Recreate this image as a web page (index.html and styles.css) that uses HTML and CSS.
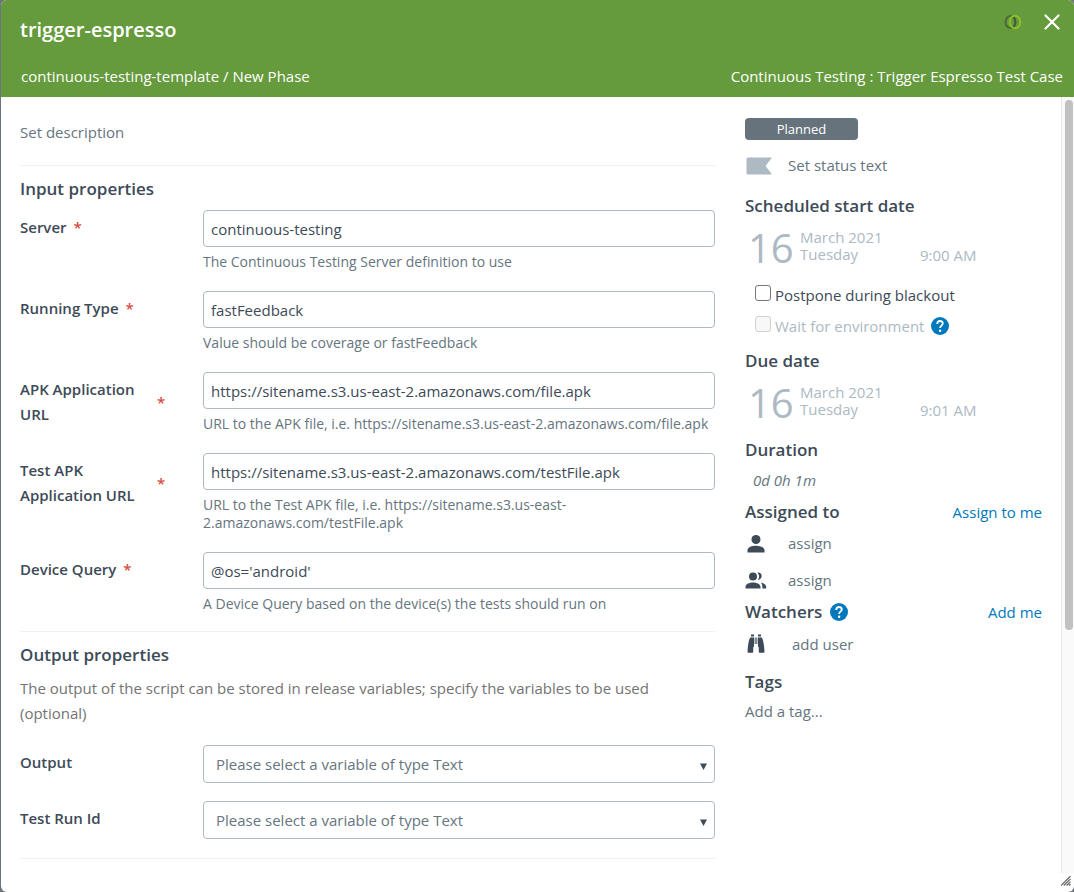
FILE: index.html
```html
<!DOCTYPE html>
<html lang="en">
<head>
<meta charset="utf-8">
<title>trigger-espresso</title>
<link rel="stylesheet" href="styles.css">
</head>
<body>
<div class="modal">
  <header class="header">
    <div class="header-row top-row">
      <h1 class="title">trigger-espresso</h1>
      <div class="header-actions">
        <svg class="task-logo" width="18" height="16" viewBox="0 0 18 16" fill="none" stroke-width="2">
          <ellipse cx="6.5" cy="8" rx="5" ry="6" stroke="#4b6b3c"/>
          <ellipse cx="11" cy="8" rx="5.3" ry="6.2" stroke="#8fbe2b"/>
          <path d="M9.6 3.2c2.4 2.6 2.4 7 0 9.6" stroke="#3f5a33" stroke-width="1.5"/>
        </svg>
        <button class="close" type="button" aria-label="Close">
          <svg width="16" height="16" viewBox="0 0 16 16" stroke="#fff" stroke-width="2.2" stroke-linecap="round"><path d="M1.5 1.5l13 13M14.5 1.5l-13 13"/></svg>
        </button>
      </div>
    </div>
    <div class="header-row">
      <span class="crumbs">continuous-testing-template / New Phase</span>
      <span>Continuous Testing : Trigger Espresso Test Case</span>
    </div>
  </header>

  <div class="body">
    <main class="main">
      <p class="description">Set description</p>
      <section class="section">
        <h2 class="heading">Input properties</h2>
        <div class="fields">
          <div class="field">
            <label class="label" for="server"><span class="label-text">Server</span><span class="required">*</span></label>
            <div class="control"><input class="input" id="server" type="text" value="continuous-testing"><p class="hint">The Continuous Testing Server definition to use</p></div>
          </div>
          <div class="field">
            <label class="label" for="running"><span class="label-text">Running Type</span><span class="required">*</span></label>
            <div class="control"><input class="input" id="running" type="text" value="fastFeedback"><p class="hint">Value should be coverage or fastFeedback</p></div>
          </div>
          <div class="field">
            <label class="label" for="apk"><span class="label-text">APK Application URL</span><span class="required">*</span></label>
            <div class="control"><input class="input" id="apk" type="text" value="https://sitename.s3.us-east-2.amazonaws.com/file.apk"><p class="hint">URL to the APK file, i.e. https://sitename.s3.us-east-2.amazonaws.com/file.apk</p></div>
          </div>
          <div class="field">
            <label class="label" for="testapk"><span class="label-text">Test APK Application URL</span><span class="required">*</span></label>
            <div class="control"><input class="input" id="testapk" type="text" value="https://sitename.s3.us-east-2.amazonaws.com/testFile.apk"><p class="hint">URL to the Test APK file, i.e. https://sitename.s3.us-east-2.amazonaws.com/testFile.apk</p></div>
          </div>
          <div class="field">
            <label class="label" for="query"><span class="label-text">Device Query</span><span class="required">*</span></label>
            <div class="control"><input class="input" id="query" type="text" value="@os='android'"><p class="hint">A Device Query based on the device(s) the tests should run on</p></div>
          </div>
        </div>
      </section>
      <section class="section">
        <h2 class="heading">Output properties</h2>
        <p class="note">The output of the script can be stored in release variables; specify the variables to be used (optional)</p>
        <div class="fields outputs">
          <div class="field">
            <label class="label" for="output"><span class="label-text">Output</span></label>
            <div class="control select-wrap"><select class="input select" id="output"><option>Please select a variable of type Text</option></select><svg class="arrow" width="7" height="7" viewBox="0 0 7 7"><path d="M0 .5h7L3.500 7z" fill="#3d4a57"/></svg></div>
          </div>
          <div class="field">
            <label class="label" for="runid"><span class="label-text">Test Run Id</span></label>
            <div class="control select-wrap"><select class="input select" id="runid"><option>Please select a variable of type Text</option></select><svg class="arrow" width="7" height="7" viewBox="0 0 7 7"><path d="M0 .5h7L3.500 7z" fill="#3d4a57"/></svg></div>
          </div>
        </div>
      </section>
      <div class="section"></div>
    </main>

    <aside class="side">
      <span class="badge">Planned</span>
      <div class="status">
        <svg width="26" height="18" viewBox="0 0 26 18"><path d="M2 .5h24L19.500 9l6.500 8.500H2A1.500 1.500 0 0 1 .5 16V2A1.500 1.500 0 0 1 2 .5z" fill="#adb9c3"/></svg>
        <span>Set status text</span>
      </div>
      <h2 class="heading">Scheduled start date</h2>
      <div class="date">
        <span class="day">16</span>
        <span class="month">March 2021<br>Tuesday</span>
        <span class="time">9:00 AM</span>
      </div>
      <div class="checks">
        <label class="check"><input class="box" type="checkbox"><span>Postpone during blackout</span></label>
        <div class="check-row">
          <label class="check disabled"><input class="box" type="checkbox" disabled><span>Wait for environment</span></label>
          <svg class="help" width="18" height="18" viewBox="0 0 18 18"><circle cx="9" cy="9" r="9" fill="#0079bc"/><path d="M6.200 6.900C6.200 5 7.400 4 9 4s2.800 1 2.800 2.600c0 1.900-2.700 2.200-2.700 4.300" fill="none" stroke="#fff" stroke-width="1.800"/><circle cx="9.100" cy="13.700" r="1.200" fill="#fff"/></svg>
        </div>
      </div>
      <h2 class="heading">Due date</h2>
      <div class="date due">
        <span class="day">16</span>
        <span class="month">March 2021<br>Tuesday</span>
        <span class="time">9:01 AM</span>
      </div>
      <h2 class="heading">Duration</h2>
      <p class="duration">0d 0h 1m</p>
      <div class="heading-row"><h2 class="heading">Assigned to</h2><a class="link" href="#">Assign to me</a></div>
      <div class="person">
        <svg width="22" height="20" viewBox="0 0 22 20" fill="#3d4a57"><circle cx="11" cy="5.500" r="4.500"/><path d="M2.500 18.500v-2C2.500 13.200 7 11.800 11 11.800s8.500 1.400 8.500 4.700v2z"/></svg>
        <span>assign</span>
      </div>
      <div class="person">
        <svg width="22" height="20" viewBox="0 0 22 20" fill="#3d4a57"><circle cx="8" cy="5.500" r="4"/><path d="M.5 17.500v-1.600C.5 13 4.500 11.500 8 11.500s7.500 1.500 7.500 4.400v1.600zM12.500 1.700c4.800-.9 6.400 6.300 0 7.600 2.200-2.300 2.200-5.200 0-7.600zM16 11.800c3 .4 5.200 1.900 5.200 4.100v1.600h-3.800v-1.600c0-1.600-.4-3-1.400-4.100z"/></svg>
        <span>assign</span>
      </div>
      <div class="heading-row">
        <h2 class="heading">Watchers</h2>
        <svg class="help" width="18" height="18" viewBox="0 0 18 18"><circle cx="9" cy="9" r="9" fill="#0079bc"/><path d="M6.200 6.900C6.200 5 7.400 4 9 4s2.800 1 2.800 2.600c0 1.900-2.700 2.200-2.700 4.300" fill="none" stroke="#fff" stroke-width="1.800"/><circle cx="9.100" cy="13.700" r="1.200" fill="#fff"/></svg>
        <a class="link" href="#">Add me</a>
      </div>
      <div class="person watcher">
        <svg width="22" height="20" viewBox="0 0 22 20" fill="#3d4a57"><path d="M6 .5h3v2H6zM13 .5h3v2h-3zM5 3.500h4v9l-.8 1V18q0 .8-.8.8H3.300q-.8 0-.8-.8C2.800 12 3.400 7.500 5 3.500zM13 3.500h4c1.600 4 2.200 8.500 2.500 14.500q0 .8-.8.8h-4.100q-.8 0-.8-.8v-4.500l-.8-1z"/><path d="M9.500 3.500h3V10h-3z" fill="#818a94"/></svg>
        <span>add user</span>
      </div>
      <h2 class="heading">Tags</h2>
      <p class="add-tag">Add a tag...</p>
    </aside>

    <div class="scroll"><div class="track"><div class="thumb"></div></div>
      <svg class="grip" width="10" height="10" viewBox="0 0 10 10" stroke="#666" stroke-width="1.200"><path d="M0 9.500L9.500 0M2.800 9.500l6.700-6.700M5.600 9.500l3.900-3.900M8 9.500l1.500-1.500"/></svg>
    </div>
  </div>
</div>
</body>
</html>
```
FILE: styles.css
```css
* { box-sizing: border-box; }

body {
  margin: 0;
  background: #6d757c;
  color: #3d4a57;
  font: 15px/25px "Open Sans", sans-serif;
}

h1, h2, p { margin: 0; }

.modal {
  display: flex;
  flex-direction: column;
  min-height: 100vh;
  margin-left: 1px;
  border-radius: 6px;
  overflow: hidden;
  background: #fff;
}

.header {
  display: flex;
  flex-direction: column;
  justify-content: space-between;
  padding: 14px 11px 8px 19px;
  background: #659a3d;
  color: #fff;
}

.header-row {
  display: flex;
  justify-content: space-between;
  align-items: center;
}

.top-row {
  align-items: flex-start;
  min-height: 50px;
}

.title {
  padding-top: 3px;
  font-size: 20px;
  font-weight: 600;
  line-height: 25px;
}

.header-actions {
  display: flex;
  align-items: center;
  gap: 22px;
  padding-right: 3px;
}

.close {
  display: flex;
  padding: 0;
  border: 0;
  background: none;
}

.crumbs { padding-left: 1px; }

.body {
  display: flex;
  flex: 1;
}

.main {
  flex: 1;
  padding-left: 19px;
  color: #667580;
}

.description { padding: 23px 0 20px; }

.section {
  border-top: 1px solid #eff1f3;
  padding-top: 10px;
}

.heading {
  color: #3d4a57;
  font-size: 17px;
  font-weight: 600;
  line-height: 26px;
}

.fields {
  display: grid;
  gap: 20px;
  padding: 8px 0 18px;
}

.field {
  display: grid;
  grid-template-columns: 183px 1fr;
  align-items: start;
}

.label {
  display: flex;
  align-items: center;
  gap: 7px;
  padding-top: 5px;
  color: #3d4a57;
  font-weight: 600;
}

.label-text { max-width: 130px; }

.required { color: #d94c3d; }

.input {
  display: block;
  width: 100%;
  height: 37px;
  padding: 0 7px;
  border: 1px solid #adb9c3;
  border-radius: 4px;
  background: #fff;
  color: #3d4a57;
  font: inherit;
}

.hint {
  padding-top: 6px;
  font-size: 14px;
  line-height: 18px;
}

.note {
  padding-top: 8px;
  color: #737373;
}

.outputs {
  gap: 18px;
  padding: 19px 0;
}

.select-wrap { position: relative; }

.select {
  height: 38px;
  padding: 0 12px;
  appearance: none;
  color: #667580;
}

.arrow {
  position: absolute;
  top: 18px;
  right: 8px;
  pointer-events: none;
}

.side {
  width: 297px;
  margin: 21px 19px 0 30px;
  color: #667580;
}

.badge {
  display: block;
  width: 113px;
  border-radius: 4px;
  background: #66737c;
  color: #fff;
  font-size: 13px;
  line-height: 22px;
  text-align: center;
}

.status {
  display: flex;
  align-items: center;
  gap: 16px;
  padding: 13px 0 15px 1px;
}

.date {
  display: flex;
  padding: 6px 0 0 3px;
  height: 60px;
  color: #adb9c3;
}

.day {
  width: 52px;
  font-size: 40px;
  line-height: 46px;
}

.month {
  width: 120px;
  padding-top: 4px;
  line-height: 17px;
}

.time { padding-top: 18px; }

.checks { padding: 2px 0 9px 10px; }

.check {
  display: flex;
  gap: 4px;
  color: #3d4a57;
}

.check span { padding-top: 2px; }

.check.disabled { color: #adb9c3; }

.check-row {
  display: flex;
  align-items: center;
  gap: 7px;
  padding-top: 4px;
}

.box {
  width: 16px;
  height: 16px;
  margin: 4px 0 0;
  appearance: none;
  border: 1px solid #767676;
  border-radius: 3px;
  background: #fff;
}

.box:disabled {
  border-color: #d1d1d1;
  background: #f8f8f8;
}

.due { height: 63px; }

.duration {
  padding: 5px 0 6px 8px;
  font-style: italic;
}

.heading-row {
  display: flex;
  align-items: center;
  gap: 8px;
}

.link {
  margin-left: auto;
  color: #0079bc;
  text-decoration: none;
}

.person {
  display: flex;
  align-items: center;
  gap: 21px;
  height: 37px;
}

.watcher {
  gap: 25px;
  height: 44px;
  padding-bottom: 6px;
}

.add-tag { padding-top: 4px; }

.scroll {
  display: flex;
  flex-direction: column;
  width: 13px;
}

.track {
  flex: 1;
  padding: 3px 1px 0 3px;
  border-left: 1px solid #e8e8e8;
  background: #fafafa;
}

.thumb {
  width: 8px;
  height: 530px;
  border-radius: 4px;
  background: #c1c1c1;
}

.grip { margin: 3px 0 6px; }
```
